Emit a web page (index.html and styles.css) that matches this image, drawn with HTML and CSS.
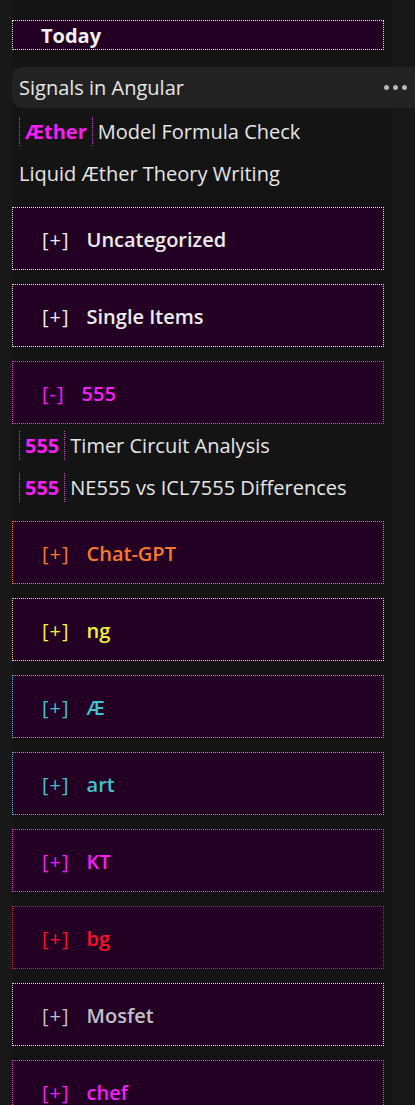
FILE: index.html
```html
<!DOCTYPE html>
<html lang="en">
<head>
<meta charset="utf-8">
<title>Chats</title>
<link rel="stylesheet" href="styles.css">
</head>
<body>
<nav class="sidebar">
  <div class="day-header">Today</div>

  <div class="chat chat--active">
    <span class="chat__title">Signals in Angular</span>
    <span class="more"><i></i><i></i><i></i></span>
  </div>
  <div class="chat">
    <span class="tag">Æther</span>
    <span class="chat__title">Model Formula Check</span>
  </div>
  <div class="chat chat--last">
    <span class="chat__title">Liquid Æther Theory Writing</span>
  </div>

  <div class="group group--white"><span class="toggle">[+]</span><span class="group__name">Uncategorized</span></div>
  <div class="group group--white"><span class="toggle">[+]</span><span class="group__name">Single Items</span></div>
  <div class="group group--magenta group--open"><span class="toggle">[-]</span><span class="group__name">555</span></div>

  <div class="chat">
    <span class="tag">555</span>
    <span class="chat__title">Timer Circuit Analysis</span>
  </div>
  <div class="chat chat--last">
    <span class="tag">555</span>
    <span class="chat__title">NE555 vs ICL7555 Differences</span>
  </div>

  <div class="group group--orange"><span class="toggle">[+]</span><span class="group__name">Chat-GPT</span></div>
  <div class="group group--yellow"><span class="toggle">[+]</span><span class="group__name">ng</span></div>
  <div class="group group--cyan"><span class="toggle">[+]</span><span class="group__name">Æ</span></div>
  <div class="group group--cyan"><span class="toggle">[+]</span><span class="group__name">art</span></div>
  <div class="group group--magenta"><span class="toggle">[+]</span><span class="group__name">KT</span></div>
  <div class="group group--red"><span class="toggle">[+]</span><span class="group__name">bg</span></div>
  <div class="group group--gray"><span class="toggle">[+]</span><span class="group__name">Mosfet</span></div>
  <div class="group group--magenta"><span class="toggle">[+]</span><span class="group__name">chef</span></div>
</nav>
</body>
</html>
```

FILE: styles.css
```css
* { box-sizing: border-box; }

html, body {
  margin: 0;
  padding: 0;
  background: #181818;
  overflow: hidden;
  height: 100%;
}

body {
  font-family: "Open Sans", "Noto Sans", sans-serif;
  font-size: 20px;
  color: #e6e6e6;
}

.sidebar {
  margin-left: 12px;
  width: 380px;
  min-height: 100%;
  background: #141414;
  padding-top: 20px;
  display: flex;
  flex-direction: column;
}

.day-header {
  width: 372px;
  height: 30px;
  border: 1px dotted #e8e8e8;
  background: #230023;
  padding-left: 28px;
  display: flex;
  align-items: center;
  font-weight: 700;
  color: #f0f0f0;
  margin-bottom: 17px;
}

.chat {
  height: 42px;
  padding-left: 7px;
  display: flex;
  align-items: center;
  white-space: nowrap;
}

.chat--active {
  height: 41px;
  margin-right: -40px;
  padding-right: 25px;
  background: #222222;
  border-radius: 10px;
  justify-content: space-between;
  margin-bottom: 2px;
}

.chat--last {
  margin-bottom: 13px;
}

.tag {
  height: 29px;
  display: flex;
  align-items: center;
  padding: 0 5px 0 5px;
  border-left: 1px dotted #d040d0;
  border-right: 1px dotted #d040d0;
  font-weight: 700;
  color: #f51ef5;
  margin-right: 5px;
}

.more {
  display: flex;
  gap: 4px;
}

.more i {
  width: 5px;
  height: 5px;
  border-radius: 50%;
  background: #b8b8b8;
}

.group {
  width: 372px;
  height: 63px;
  border: 1px dotted #e8e8e8;
  background: #230023;
  padding-left: 29px;
  padding-top: 2px;
  display: flex;
  align-items: center;
  gap: 17px;
  margin-bottom: 14px;
  color: #ececec;
}

.group--open {
  margin-bottom: 0;
}

.toggle {
  font-weight: 400;
  letter-spacing: 1px;
}

.group__name {
  font-weight: 600;
}

.group--magenta { border-color: #e040e0; color: #f51ef5; }
.group--orange  { border-color: #ff7a2c; color: #f87a2e; }
.group--yellow  { border-color: #f3e070; color: #f2f23a; }
.group--cyan    { border-color: #40c8d4; color: #3ec4cc; }
.group--red     { border-color: #d8203a; color: #ff0f2e; }
.group--gray    { border-color: #e0e0e0; color: #c0c0c8; }
```
